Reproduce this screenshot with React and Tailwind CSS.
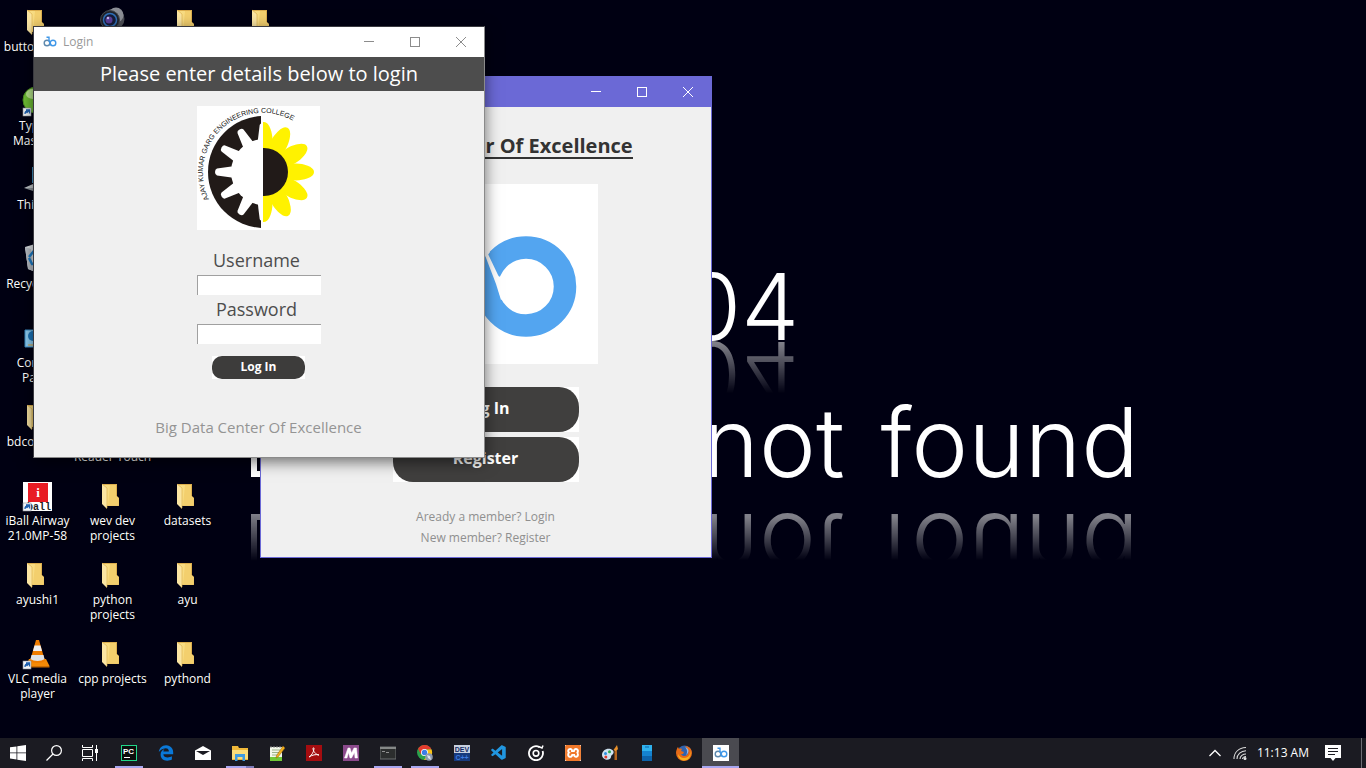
import React from "react";
import { FaEdgeLegacy } from "react-icons/fa";
import { VscVscode } from "react-icons/vsc";
import { SiXampp } from "react-icons/si";

/* ---------- Desktop icon drawings (32 x 32) ---------- */

const iconClass = "mr-[2px] size-8 shrink-0";

function FolderIcon() {
  return (
    <svg viewBox="0 0 32 32" className={iconClass} aria-hidden="true">
      <path d="M6 4h15v12l2 2v8H10z" fill="#dcae4e" />
      <path d="M7 5h13v11l2.500 2v7.500H10z" fill="#f8dc82" />
      <path d="M14 5h6v11l2.500 2v7.500H12z" fill="#f3cf6d" />
      <path d="M6 4l5 4v20.500l-1-.5-4-4z" fill="#fbe5a2" />
      <path d="M6 4l5 4v20l-1 .5" fill="none" stroke="#d9ab48" strokeWidth="0.6" />
    </svg>
  );
}

function ShortcutArrow() {
  return (
    <g>
      <rect x="2" y="23" width="8" height="8" fill="#f4f6f8" stroke="#8b9099" strokeWidth="0.6" />
      <path d="M4 29c0-2 1-3 2.500-3M5 25h3.500v3.500M8.300 25.200L5.500 28" stroke="#1e5fae" strokeWidth="1.300" fill="none" />
    </g>
  );
}

function CameraIcon() {
  return (
    <svg viewBox="0 0 32 32" className={iconClass} aria-hidden="true">
      <circle cx="18" cy="13" r="10.500" fill="#4d4f56" />
      <circle cx="20" cy="9" r="7.500" fill="#8b8e95" />
      <circle cx="14" cy="14" r="9.500" fill="#20232b" stroke="#44484f" />
      <circle cx="14" cy="14" r="6.500" fill="#151b38" stroke="#2f6fb8" strokeWidth="1.500" />
      <circle cx="13" cy="14" r="3.500" fill="#5a3f9a" />
      <circle cx="12" cy="12" r="1.200" fill="#c9b8f2" />
    </svg>
  );
}

function TypingIcon() {
  return (
    <svg viewBox="0 0 32 32" className={iconClass} aria-hidden="true">
      <circle cx="15" cy="15" r="13" fill="#6fbe35" stroke="#4b8d22" />
      <ellipse cx="12" cy="9" rx="7" ry="5" fill="#b6e58c" />
      <ShortcutArrow />
    </svg>
  );
}

function ComputerIcon() {
  return (
    <svg viewBox="0 0 32 32" className={iconClass} aria-hidden="true">
      <path d="M11 3h20v16H11z" fill="#3f8fbf" />
      <path d="M3 24l9-4h14l4 4z" fill="#c3c8cc" />
      <path d="M3 24h27l-3 3H12z" fill="#8f969c" />
    </svg>
  );
}

function RecycleIcon() {
  return (
    <svg viewBox="0 0 32 32" className={iconClass} aria-hidden="true">
      <path d="M4 4l10-3 13 3-3 21-12 3-5-2z" fill="#dfe3e7" />
      <path d="M4 4l6 2 2 22-5-2z" fill="#b9bfc6" />
      <path d="M8 14l4-5 5 4M8 15l3 6h6M18 14l2 6" stroke="#1d7fcb" strokeWidth="2.500" fill="none" />
    </svg>
  );
}

function ControlIcon() {
  return (
    <svg viewBox="0 0 32 32" className={iconClass} aria-hidden="true">
      <path d="M4 8h24v17H4z" fill="#8fd0f5" stroke="#3a8cc4" />
      <circle cx="12" cy="14" r="5" fill="#1c77bd" />
      <path d="M12 14V9a5 5 0 0 1 5 5z" fill="#fff" />
      <path d="M7 23h9" stroke="#e0a23a" />
    </svg>
  );
}

function IballIcon() {
  return (
    <svg viewBox="0 0 32 32" className={iconClass} aria-hidden="true">
      <rect x="2" y="2" width="29" height="29" fill="#fff" />
      <rect x="7" y="3" width="20" height="19" fill="#e81c24" />
      <text x="17" y="17" textAnchor="middle" fontSize="13" fontWeight="700" fill="#fff" fontFamily="Liberation Serif, serif">i</text>
      <text x="18" y="30" textAnchor="middle" fontSize="10" fontWeight="700" fill="#222" fontFamily="Liberation Mono, monospace">ball</text>
      <ShortcutArrow />
    </svg>
  );
}

function VlcIcon() {
  return (
    <svg viewBox="0 0 32 32" className={iconClass} aria-hidden="true">
      <path d="M8 21h17l3.500 7H5z" fill="#f58a07" />
      <path d="M5 28h23.500v1.500H5z" fill="#c96a00" />
      <path d="M15 2h3l6 21c-3 2.500-12 2.500-15 0z" fill="#f07d00" />
      <path d="M13.500 7.500h6l1.500 5.500h-9z" fill="#eef0f2" />
      <path d="M10.500 17h12l1 4c-3 2.500-11 2.500-14 0z" fill="#dfe3e6" />
      <ShortcutArrow />
    </svg>
  );
}

/* ---------- Logos ---------- */

function CollegeLogo() {
  const teeth = [91, 120, 150, 180, 210, 240, 269];
  const petals = [-90, -62, -31, 0, 31, 61, 90];
  return (
    <svg viewBox="0 0 123 124" className="w-[123px] bg-white" role="img" aria-label="Ajay Kumar Garg Engineering College">
      <defs>
        <clipPath id="gear-half"><rect x="0" y="0" width="64" height="124" /></clipPath>
        <clipPath id="flower-half"><rect x="66" y="0" width="57" height="124" /></clipPath>
        <path id="college-arc" d="M12 93.300A60 60 0 0 1 104.600 21" />
      </defs>
      <g clipPath="url(#gear-half)">
        <circle cx="67" cy="66" r="56" fill="#211a18" />
        <circle cx="67" cy="66" r="33" fill="#fff" />
        {teeth.map((a) => (
          <path key={a} d="M96 60L114 62.500Q116 63 116 66Q116 69 114 69.500L96 72z" fill="#fff" transform={`rotate(${a} 67 66)`} />
        ))}
      </g>
      <g clipPath="url(#flower-half)">
        {petals.map((a) => (
          <path key={a} d="M80 66C90 55 103 57 110 59.500Q117 62 117 66Q117 70 110 72.500C103 75 90 77 80 66z" fill="#fff200" transform={`rotate(${a} 67 66)`} />
        ))}
        <circle cx="67" cy="66" r="27" fill="#fff200" />
        <circle cx="67" cy="66" r="24" fill="#211a18" />
      </g>
      <text fontSize="7" fill="#111" fontFamily="Liberation Sans, Arial, sans-serif">
        <textPath href="#college-arc">AJAY KUMAR GARG ENGINEERING COLLEGE</textPath>
      </text>
    </svg>
  );
}

function BigDataLogo() {
  return (
    <svg viewBox="0 0 225 180" className="w-[225px] bg-white" role="img" aria-label="Big Data logo">
      <circle cx="70" cy="102" r="39" fill="none" stroke="#7d8790" strokeWidth="22" />
      <circle cx="153" cy="102.500" r="39" fill="none" stroke="#53a5f0" strokeWidth="22.500" />
      <path d="M96 50L111 68L131 122L116 133L103 116z" fill="#53a5f0" />
      <path d="M110 66L115 70L125 91Q126 94 129 92L136 112L128 116L123 100z" fill="#fff" />
      <path d="M106 60L117 68L114 72L110 68z" fill="#fff" />
    </svg>
  );
}

function BdMark({ className }) {
  return (
    <svg viewBox="0 0 16 16" className={className} aria-hidden="true">
      <circle cx="5" cy="9" r="2.800" fill="none" stroke="#5d88ad" strokeWidth="1.400" />
      <circle cx="11" cy="9" r="2.800" fill="none" stroke="#3f97e8" strokeWidth="1.400" />
      <path d="M4.500 3.200h2.500v3.300l2 4.500" fill="none" stroke="#3f97e8" strokeWidth="1.400" />
    </svg>
  );
}

/* ---------- Window chrome ---------- */

function CaptionButtons({ tone }) {
  const cls = "flex h-full w-[46px] items-center justify-center " + tone;
  return (
    <div className="flex h-full">
      <button type="button" aria-label="Minimize" className={cls}>
        <svg viewBox="0 0 10 10" className="size-[10px]"><path d="M0 4.500h10" stroke="currentColor" /></svg>
      </button>
      <button type="button" aria-label="Maximize" className={cls}>
        <svg viewBox="0 0 10 10" className="size-[10px]"><rect x="0.500" y="0.500" width="9" height="9" fill="none" stroke="currentColor" /></svg>
      </button>
      <button type="button" aria-label="Close" className={cls}>
        <svg viewBox="0 0 10 10" className="size-[10px]"><path d="M0 0l10 10M10 0L0 10" stroke="currentColor" /></svg>
      </button>
    </div>
  );
}

function MainWindow() {
  return (
    <section aria-label="Big Data Center Of Excellence" className="absolute left-[260px] top-[76px] z-10 w-[452px] border border-[#6b69d6] bg-[#f0f0f0] pb-[9px] font-['Open_Sans',sans-serif]">
      <header className="flex h-[30px] justify-end bg-[#6b69d6]">
        <CaptionButtons tone="text-white" />
      </header>
      <div className="flex flex-col items-center pr-[1px]">
        <h1 className="mt-7 border-b-2 border-[#333] text-[20px] leading-[22px] font-bold text-[#333]">Big Data Center Of Excellence</h1>
        <div className="mt-[25px]"><BigDataLogo /></div>
        <div className="mt-[23px] flex flex-col gap-[5px]">
          {["Log In", "Register"].map((t) => (
            <div key={t} className="bg-white">
              <button type="button" className="block h-[45px] w-[186px] rounded-[20px] bg-[#403f3e] pb-1 text-[16px] font-bold text-white">{t}</button>
            </div>
          ))}
        </div>
        <p className="mt-6 text-[12px] leading-[21px] text-[#8f8f8f]">Aready a member? Login</p>
        <p className="text-[12px] leading-[21px] text-[#8f8f8f]">New member? Register</p>
      </div>
    </section>
  );
}

function LoginWindow() {
  return (
    <section aria-label="Login" className="absolute left-[33px] top-[26px] z-20 w-[452px] border border-[#3a3a40] border-r-[#8a8a8a] border-b-[#8a8a8a] bg-[#f0f0f0] pb-[18px] font-['Open_Sans',sans-serif] shadow-[0_4px_14px_rgba(0,0,0,0.55)]">
      <header className="flex h-[30px] items-center bg-white">
        <BdMark className="ml-2 size-4" />
        <span className="ml-[5px] flex-1 text-[12px] text-[#999]">Login</span>
        <CaptionButtons tone="text-[#8c8c8c]" />
      </header>
      <h2 className="bg-[#4d4d4d] text-center text-[20px] leading-[34px] text-white">Please enter details below to login</h2>
      <form className="flex flex-col items-center pr-[1px]" onSubmit={(e) => e.preventDefault()}>
        <div className="mt-[15px]"><CollegeLogo /></div>
        <label htmlFor="username" className="mt-4 pr-1 text-[18px] leading-[29px] text-[#4d4d4d]">Username</label>
        <input id="username" type="text" className="h-[20px] w-[124px] border-t border-l border-[#a0a0a0] bg-white px-1 text-[12px] outline-none" />
        <label htmlFor="password" className="pr-1 text-[18px] leading-[29px] text-[#4d4d4d]">Password</label>
        <input id="password" type="password" className="h-[20px] w-[124px] border-t border-l border-[#a0a0a0] bg-white px-1 text-[12px] outline-none" />
        <div className="mt-3 bg-white">
          <button type="submit" className="block h-[23px] w-[93px] rounded-[10px] bg-[#3d3c3b] pb-[2px] text-[12px] font-bold text-white">Log In</button>
        </div>
        <p className="mt-9 text-[15px] leading-[24px] text-[#949494]">Big Data Center Of Excellence</p>
      </form>
    </section>
  );
}

/* ---------- Desktop ---------- */

const desktopItems = [
  { c: "col-start-1 row-start-1", icon: FolderIcon, label: "button imgs" },
  { c: "col-start-2 row-start-1", icon: CameraIcon },
  { c: "col-start-3 row-start-1", icon: FolderIcon },
  { c: "col-start-4 row-start-1", icon: FolderIcon },
  { c: "col-start-1 row-start-2", icon: TypingIcon, label: "Typing\nMaster 7" },
  { c: "col-start-1 row-start-3", icon: ComputerIcon, label: "This PC" },
  { c: "col-start-1 row-start-4", icon: RecycleIcon, label: "Recycle Bin" },
  { c: "col-start-1 row-start-5", icon: ControlIcon, label: "Control\nPanel" },
  { c: "col-start-1 row-start-6", icon: FolderIcon, label: "bdcoe logo" },
  { c: "col-start-2 row-start-6", icon: FolderIcon, label: "Adobe\nReader Touch" },
  { c: "col-start-1 row-start-7", icon: IballIcon, label: "iBall Airway\n21.0MP-58" },
  { c: "col-start-2 row-start-7", icon: FolderIcon, label: "wev dev\nprojects" },
  { c: "col-start-3 row-start-7", icon: FolderIcon, label: "datasets" },
  { c: "col-start-1 row-start-8", icon: FolderIcon, label: "ayushi1" },
  { c: "col-start-2 row-start-8", icon: FolderIcon, label: "python\nprojects" },
  { c: "col-start-3 row-start-8", icon: FolderIcon, label: "ayu" },
  { c: "col-start-1 row-start-9", icon: VlcIcon, label: "VLC media\nplayer" },
  { c: "col-start-2 row-start-9", icon: FolderIcon, label: "cpp projects" },
  { c: "col-start-3 row-start-9", icon: FolderIcon, label: "pythond" },
];

function DesktopIcons() {
  return (
    <ul className="relative grid w-[300px] auto-rows-[79px] grid-cols-4">
      {desktopItems.map(({ c, icon: Icon, label }) => (
        <li key={c} className={"flex flex-col items-center pt-[6px] " + c}>
          <Icon />
          {label && <span className="mt-[1px] text-center text-[12px] leading-[15px] whitespace-pre text-white [text-shadow:1px_1px_2px_#000]">{label}</span>}
        </li>
      ))}
    </ul>
  );
}

function Wallpaper() {
  return (
    <div className="absolute inset-0 overflow-hidden font-['Inter',sans-serif] leading-[92px] font-light text-white">
      <div className="absolute left-[600px] top-[261px] w-[199px] text-right text-[92px] [-webkit-box-reflect:below_-24px_linear-gradient(transparent_30%,rgba(255,255,255,0.5)_85%)]">404</div>
      <div className="absolute left-[251px] top-[410px] h-[67px] w-12 border-b-[6px] border-l-[6px] border-white [-webkit-box-reflect:below_37px_linear-gradient(transparent_30%,rgba(255,255,255,0.5))]" />
      <div className="absolute left-[600px] top-[396px] flex w-[539px] justify-end gap-9 text-[96px] [-webkit-box-reflect:below_15px_linear-gradient(transparent_38%,rgba(255,255,255,0.5)_85%)]">
        <span>not</span>
        <span>found</span>
      </div>
    </div>
  );
}

/* ---------- Taskbar ---------- */

const tasks = [
  {
    name: "PyCharm", state: "open",
    art: (
      <svg viewBox="0 0 16 16" className="size-4">
        <rect x="0.500" y="0.500" width="15" height="15" fill="#0b0d0c" stroke="#21d789" />
        <text x="2" y="9" fontSize="8" fontWeight="700" fill="#fff" fontFamily="Liberation Sans, sans-serif">PC</text>
        <path d="M3 12.500h6" stroke="#fff" />
      </svg>
    ),
  },
  { name: "Microsoft Edge", art: <FaEdgeLegacy className="size-4 text-[#0a78d7]" /> },
  {
    name: "Mail",
    art: (
      <svg viewBox="0 0 16 16" className="size-4">
        <path d="M0 5.500L8 1l8 4.500V15H0z" fill="#fff" />
        <path d="M1 6h14L8 10z" fill="#1b1b22" />
      </svg>
    ),
  },
  {
    name: "File Explorer", state: "multi",
    art: (
      <svg viewBox="0 0 16 16" className="size-4">
        <path d="M0 1h6l1 2h9v12H0z" fill="#f0b93a" />
        <path d="M0 5h16v9H0z" fill="#fbdd7a" />
        <path d="M3 9h10v7h-2.500v-4h-5v4H3z" fill="#3f9be0" />
      </svg>
    ),
  },
  {
    name: "Notepad++",
    art: (
      <svg viewBox="0 0 16 16" className="size-4">
        <path d="M1 2h12v14H1z" fill="#f3f7ea" />
        <path d="M1 12h12v4H1z" fill="#71c837" />
        <path d="M3 5h8M3 7.500h8M3 10h6" stroke="#9bb38a" />
        <path d="M2 1v2M5 1v2M8 1v2M11 1v2" stroke="#888" />
        <path d="M14 1l2 2-7 9-2 1 .5-2.500z" fill="#f2b01e" stroke="#8a5a0a" strokeWidth="0.500" />
      </svg>
    ),
  },
  {
    name: "Adobe Reader",
    art: (
      <svg viewBox="0 0 16 16" className="size-4">
        <rect width="16" height="16" fill="#a50d10" />
        <path d="M3 12c2-1 5-5 5-8.500 0-1-1-1-1 0C7 6 9.500 9.500 13 10c-3-1-7 0-10 2z" fill="none" stroke="#fff" />
      </svg>
    ),
  },
  {
    name: "Mail Client",
    art: (
      <svg viewBox="0 0 16 16" className="size-4">
        <rect width="16" height="16" fill="#8b4a8c" />
        <path d="M1.500 13L5 3h2l1.500 5L11 3h2.500l1 10H12l-.5-5.500L8.500 13H7L5.500 7.500 4 13z" fill="#fff" stroke="#fff" strokeWidth="0.500" />
      </svg>
    ),
  },
  {
    name: "Command Prompt", state: "open",
    art: (
      <svg viewBox="0 0 16 16" className="size-4">
        <rect x="0" y="2" width="16" height="12" fill="#2c2e2e" stroke="#6d7070" />
        <rect x="0" y="2" width="16" height="2" fill="#858888" />
        <path d="M2 6.500h3M6 7.500h3" stroke="#aaa" strokeWidth="0.800" />
      </svg>
    ),
  },
  {
    name: "Chrome", state: "open",
    art: (
      <svg viewBox="0 0 16 16" className="size-4">
        <circle cx="7.500" cy="7.500" r="7.500" fill="#2ba24c" />
        <path d="M7.500 0A7.500 7.500 0 0 1 14.500 4.500H7.500L4 9.500 1 3.800A7.500 7.500 0 0 1 7.500 0z" fill="#e33b2e" />
        <path d="M14.500 4.500A7.500 7.500 0 0 1 7 15l4-6-1-4.500z" fill="#fbc116" />
        <circle cx="7.500" cy="7.500" r="3.500" fill="#fff" />
        <circle cx="7.500" cy="7.500" r="2.700" fill="#3b7de8" />
        <circle cx="12" cy="12" r="3.800" fill="#8d99ae" />
        <path d="M10 10l3 1 1 4-3-2z" fill="#dfe4ee" />
      </svg>
    ),
  },
  {
    name: "Dev-C++",
    art: (
      <svg viewBox="0 0 16 16" className="size-4">
        <rect width="16" height="16" fill="#173a7d" />
        <rect width="16" height="8" fill="#c8d0df" />
        <text x="8" y="7" textAnchor="middle" fontSize="7" fontWeight="700" fill="#132b66" fontFamily="Liberation Sans, sans-serif">DEV</text>
        <text x="8" y="15" textAnchor="middle" fontSize="7" fontWeight="700" fill="#3d7be0" fontFamily="Liberation Sans, sans-serif">C++</text>
      </svg>
    ),
  },
  { name: "Visual Studio Code", art: <VscVscode className="size-[18px] text-[#2196e0]" /> },
  {
    name: "Groove Music",
    art: (
      <svg viewBox="0 0 16 16" className="size-4" fill="none" stroke="#fff" strokeWidth="1.800">
        <path d="M11.500 2.200A7 7 0 1 0 14.600 6" />
        <path d="M10.500 1.500L14 3l1-2.500" strokeWidth="1.500" />
        <circle cx="8" cy="8.300" r="2.800" strokeWidth="1.600" />
      </svg>
    ),
  },
  {
    name: "XAMPP",
    art: <span className="flex size-4 bg-white"><SiXampp className="size-4 text-[#f0782a]" /></span>,
  },
  {
    name: "Paint",
    art: (
      <svg viewBox="0 0 16 16" className="size-4">
        <path d="M0 10c0-4 4-7 8.500-6 3 1 4 3 2.500 5-1 1.500-2 1-2 3 0 2-3 3.500-5.500 2.500C1.500 14 0 12 0 10z" fill="#cfe3f2" />
        <circle cx="3.500" cy="8.500" r="1.500" fill="#2d8fe0" />
        <circle cx="7.500" cy="6.800" r="1.500" fill="#2da84c" />
        <circle cx="3.800" cy="12" r="1.500" fill="#e03a2d" />
        <path d="M11.500 5l3.500-5 1 4-2 2.500z" fill="#e8902a" />
        <path d="M12.500 6h2.500v9h-2.500z" fill="#b5651d" />
      </svg>
    ),
  },
  {
    name: "Your Phone",
    art: (
      <svg viewBox="0 0 16 16" className="size-4">
        <rect x="3" width="10" height="16" fill="#0d63ab" />
        <rect x="3" width="10" height="11" fill="#1583d0" />
        <rect x="3" width="10" height="6" fill="#2fb2ee" />
        <path d="M6 2h4" stroke="#0d63ab" />
      </svg>
    ),
  },
  {
    name: "Firefox",
    art: (
      <svg viewBox="0 0 16 16" className="size-4">
        <circle cx="8.500" cy="7.500" r="7" fill="#2f62ae" />
        <path d="M9 1c4 0 7 3 7 7a8 8 0 0 1-16 0C0 6 1 3 2 2l1 2c2-1 3 0 3 0L5 6l3 1-1 2H5c1 2 4 3 6 1 2-1.500 2-5-2-9z" fill="#e66a17" />
        <path d="M9 2c2 2 3 5 1 8 3-2 4-6-1-8z" fill="#8fb6e6" />
        <path d="M14 5c1 4-1 8-6 8-3 0-5-2-6-4 0 4 3 6.500 6 6.500 5 0 8-5 6-10.500z" fill="#f9b21d" />
      </svg>
    ),
  },
  { name: "Login", state: "active", art: <span className="flex size-4 bg-white"><BdMark className="size-4" /></span> },
];

function TaskLine({ state }) {
  if (state === "multi")
    return (
      <span className="flex h-[2px] w-7">
        <span className="flex-1 bg-[#a8a6f0]" />
        <span className="w-2 bg-[#7c7ab8]" />
      </span>
    );
  if (state === "open") return <span className="h-[2px] w-7 bg-[#a8a6f0]" />;
  if (state === "active") return <span className="h-[2px] w-full bg-[#a8a6f0]" />;
  return <span className="h-[2px]" />;
}

function Taskbar() {
  return (
    <nav aria-label="Taskbar" className="flex h-[30px] shrink-0 items-stretch bg-[#1b1b22] text-white">
      <button type="button" aria-label="Start" className="flex w-9 items-center justify-center">
        <svg viewBox="0 0 16 16" className="size-4" fill="#fff"><path d="M0 2.300l6.500-.9v6.100H0zM7.300 1.300L16 0v7.500H7.300zM0 8.300h6.500v6.200L0 13.600zM7.300 8.300H16V16l-8.700-1.300z" /></svg>
      </button>
      <button type="button" aria-label="Search" className="flex w-9 items-center justify-center">
        <svg viewBox="0 0 16 16" className="size-4" fill="none" stroke="#fff" strokeWidth="1.200"><circle cx="10.500" cy="5.500" r="4.900" /><path d="M7 9L.5 15.500" /></svg>
      </button>
      <button type="button" aria-label="Task View" className="mr-[2px] flex w-9 items-center justify-center">
        <svg viewBox="0 0 16 16" className="size-4" fill="none" stroke="#fff"><path d="M.5 0v2.500h10V0M.5 16v-2.500h10V16M.5 4.500h10v7H.5zM14.500 0v16" /><rect x="13.500" y="4.500" width="2" height="3" fill="#fff" /></svg>
      </button>
      {tasks.map(({ name, state, art }) => (
        <button
          key={name}
          type="button"
          aria-label={name}
          className={"flex w-[37px] flex-col items-center pt-[2px] " + (state === "active" ? "bg-[#4a4a50]" : "")}
        >
          <span className="flex flex-1 items-center">{art}</span>
          <TaskLine state={state} />
        </button>
      ))}
      <div className="ml-auto flex items-center">
        <button type="button" aria-label="Show hidden icons" className="mr-3">
          <svg viewBox="0 0 12 8" className="h-2 w-3" fill="none" stroke="#fff" strokeWidth="1.300"><path d="M.5 7L6 1.500 11.500 7" /></svg>
        </button>
        <button type="button" aria-label="Network" className="mr-[10px]">
          <svg viewBox="0 0 14 14" className="size-[14px]" fill="none" stroke="#ddd" strokeWidth="1.100">
            <path d="M1 13C1 6 6 2 13 1.500M4 13c0-5 4-8 9-8.300M7 13c0-3 3-5 6-5M9.500 13c0-1.500 2-2.500 3.500-2.500" />
            <circle cx="12" cy="12.500" r="1" fill="#fff" />
          </svg>
        </button>
        <time className="text-[12px]">11:13 AM</time>
        <button type="button" aria-label="Notifications" className="mr-5 ml-4">
          <svg viewBox="0 0 16 16" className="size-4"><path d="M0 0h16v13h-5.500L8 16l-2.500-3H0z" fill="#fff" /><path d="M3 3.500h10M3 6.500h10M3 9.500h7" stroke="#1b1b22" /></svg>
        </button>
        <span className="mr-1 h-[30px] border-l border-[#6d6d74]" />
      </div>
    </nav>
  );
}

export default function App() {
  return (
    <div className="flex h-screen flex-col overflow-hidden bg-[#000012] font-['Open_Sans',sans-serif]">
      <main className="relative flex-1">
        <Wallpaper />
        <DesktopIcons />
        <MainWindow />
        <LoginWindow />
      </main>
      <Taskbar />
    </div>
  );
}
